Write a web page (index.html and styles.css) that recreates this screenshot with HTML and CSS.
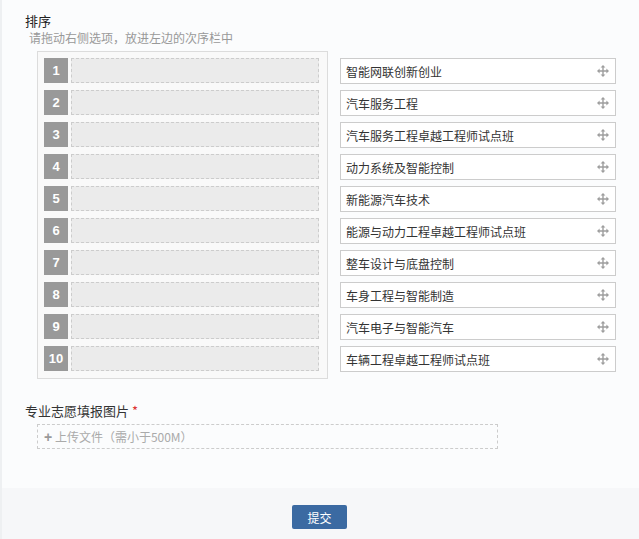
FILE: index.html
```html
<!DOCTYPE html>
<html lang="zh">
<head>
<meta charset="utf-8">
<title>排序</title>
<link rel="stylesheet" href="styles.css">
</head>
<body>
<div class="page">
  <div class="content">
    <div class="title">排序</div>
    <div class="hint">请拖动右侧选项，放进左边的次序栏中</div>
    <div class="sorter">
      <div class="slots">
        <div class="slot-row"><span class="num">1</span><span class="slot"></span></div>
        <div class="slot-row"><span class="num">2</span><span class="slot"></span></div>
        <div class="slot-row"><span class="num">3</span><span class="slot"></span></div>
        <div class="slot-row"><span class="num">4</span><span class="slot"></span></div>
        <div class="slot-row"><span class="num">5</span><span class="slot"></span></div>
        <div class="slot-row"><span class="num">6</span><span class="slot"></span></div>
        <div class="slot-row"><span class="num">7</span><span class="slot"></span></div>
        <div class="slot-row"><span class="num">8</span><span class="slot"></span></div>
        <div class="slot-row"><span class="num">9</span><span class="slot"></span></div>
        <div class="slot-row"><span class="num">10</span><span class="slot"></span></div>
      </div>
      <ul class="options">
        <li class="option"><span>智能网联创新创业</span><svg class="move" viewBox="0 0 12 12"><path d="M6 0 L3.6 2.6 H5.3 V5.3 H2.6 V3.6 L0 6 L2.6 8.4 V6.7 H5.3 V9.4 H3.6 L6 12 L8.4 9.4 H6.7 V6.7 H9.4 V8.4 L12 6 L9.4 3.6 V5.3 H6.7 V2.6 H8.4 Z"/></svg></li>
        <li class="option"><span>汽车服务工程</span><svg class="move" viewBox="0 0 12 12"><path d="M6 0 L3.6 2.6 H5.3 V5.3 H2.6 V3.6 L0 6 L2.6 8.4 V6.7 H5.3 V9.4 H3.6 L6 12 L8.4 9.4 H6.7 V6.7 H9.4 V8.4 L12 6 L9.4 3.6 V5.3 H6.7 V2.6 H8.4 Z"/></svg></li>
        <li class="option"><span>汽车服务工程卓越工程师试点班</span><svg class="move" viewBox="0 0 12 12"><path d="M6 0 L3.6 2.6 H5.3 V5.3 H2.6 V3.6 L0 6 L2.6 8.4 V6.7 H5.3 V9.4 H3.6 L6 12 L8.4 9.4 H6.7 V6.7 H9.4 V8.4 L12 6 L9.4 3.6 V5.3 H6.7 V2.6 H8.4 Z"/></svg></li>
        <li class="option"><span>动力系统及智能控制</span><svg class="move" viewBox="0 0 12 12"><path d="M6 0 L3.6 2.6 H5.3 V5.3 H2.6 V3.6 L0 6 L2.6 8.4 V6.7 H5.3 V9.4 H3.6 L6 12 L8.4 9.4 H6.7 V6.7 H9.4 V8.4 L12 6 L9.4 3.6 V5.3 H6.7 V2.6 H8.4 Z"/></svg></li>
        <li class="option"><span>新能源汽车技术</span><svg class="move" viewBox="0 0 12 12"><path d="M6 0 L3.6 2.6 H5.3 V5.3 H2.6 V3.6 L0 6 L2.6 8.4 V6.7 H5.3 V9.4 H3.6 L6 12 L8.4 9.4 H6.7 V6.7 H9.4 V8.4 L12 6 L9.4 3.6 V5.3 H6.7 V2.6 H8.4 Z"/></svg></li>
        <li class="option"><span>能源与动力工程卓越工程师试点班</span><svg class="move" viewBox="0 0 12 12"><path d="M6 0 L3.6 2.6 H5.3 V5.3 H2.6 V3.6 L0 6 L2.6 8.4 V6.7 H5.3 V9.4 H3.6 L6 12 L8.4 9.4 H6.7 V6.7 H9.4 V8.4 L12 6 L9.4 3.6 V5.3 H6.7 V2.6 H8.4 Z"/></svg></li>
        <li class="option"><span>整车设计与底盘控制</span><svg class="move" viewBox="0 0 12 12"><path d="M6 0 L3.6 2.6 H5.3 V5.3 H2.6 V3.6 L0 6 L2.6 8.4 V6.7 H5.3 V9.4 H3.6 L6 12 L8.4 9.4 H6.7 V6.7 H9.4 V8.4 L12 6 L9.4 3.6 V5.3 H6.7 V2.6 H8.4 Z"/></svg></li>
        <li class="option"><span>车身工程与智能制造</span><svg class="move" viewBox="0 0 12 12"><path d="M6 0 L3.6 2.6 H5.3 V5.3 H2.6 V3.6 L0 6 L2.6 8.4 V6.7 H5.3 V9.4 H3.6 L6 12 L8.4 9.4 H6.7 V6.7 H9.4 V8.4 L12 6 L9.4 3.6 V5.3 H6.7 V2.6 H8.4 Z"/></svg></li>
        <li class="option"><span>汽车电子与智能汽车</span><svg class="move" viewBox="0 0 12 12"><path d="M6 0 L3.6 2.6 H5.3 V5.3 H2.6 V3.6 L0 6 L2.6 8.4 V6.7 H5.3 V9.4 H3.6 L6 12 L8.4 9.4 H6.7 V6.7 H9.4 V8.4 L12 6 L9.4 3.6 V5.3 H6.7 V2.6 H8.4 Z"/></svg></li>
        <li class="option"><span>车辆工程卓越工程师试点班</span><svg class="move" viewBox="0 0 12 12"><path d="M6 0 L3.6 2.6 H5.3 V5.3 H2.6 V3.6 L0 6 L2.6 8.4 V6.7 H5.3 V9.4 H3.6 L6 12 L8.4 9.4 H6.7 V6.7 H9.4 V8.4 L12 6 L9.4 3.6 V5.3 H6.7 V2.6 H8.4 Z"/></svg></li>
      </ul>
    </div>
    <div class="label">专业志愿填报图片 <span class="req">*</span></div>
    <div class="upload"><span class="plus">+</span> 上传文件（需小于500M）</div>
  </div>
  <div class="footer">
    <button class="submit">提交</button>
  </div>
</div>
</body>
</html>
```
FILE: styles.css
```css
html, body {
  margin: 0;
  padding: 0;
  background: #fbfcfd;
}
body {
  font-family: "Noto Sans CJK SC", "Liberation Sans", sans-serif;
  color: #333;
  font-size: 12px;
}
.page {
  border-left: 2px solid #eef0f2;
  min-height: 539px;
  display: flex;
  flex-direction: column;
}
.content {
  padding: 12px 0 0 23px;
  height: 476px;
}
.title {
  font-size: 13px;
  line-height: 18px;
  color: #222;
}
.hint {
  font-size: 12px;
  line-height: 16px;
  color: #999;
  margin-left: 4px;
}
.sorter {
  display: flex;
  align-items: flex-start;
  margin-top: 5px;
}
.slots {
  margin-left: 12px;
  width: 275px;
  padding: 6px 8px 7px 6px;
  border: 1px solid #dcdcdc;
  background: #f9f9f9;
  display: flex;
  flex-direction: column;
  gap: 7px;
}
.slot-row {
  display: flex;
  gap: 3px;
  height: 25px;
}
.num {
  width: 24px;
  background: #999;
  color: #fff;
  font-family: "Liberation Sans", sans-serif;
  font-weight: bold;
  font-size: 13px;
  display: flex;
  align-items: center;
  justify-content: center;
}
.slot {
  flex: 1;
  background: #ebebeb;
  border: 1px dashed #ccc;
}
.options {
  list-style: none;
  margin: 7px 0 0 12px;
  padding: 0;
  display: flex;
  flex-direction: column;
  gap: 6px;
}
.option {
  height: 24px;
  width: 263px;
  border: 1px solid #ccc;
  background: #fff;
  display: flex;
  align-items: center;
  justify-content: space-between;
  padding: 0 6px 0 5px;
  box-sizing: content-box;
  color: #333;
}
.move {
  width: 12px;
  height: 12px;
  fill: #9e9e9e;
}
.label {
  margin-top: 23px;
  font-size: 13px;
  line-height: 18px;
  color: #333;
}
.req {
  color: #d33;
}
.upload {
  margin: 4px 0 0 12px;
  width: 453px;
  height: 23px;
  border: 1px dashed #ccc;
  padding-left: 6px;
  line-height: 23px;
  color: #aaa;
  font-size: 12px;
}
.plus {
  font-family: "Liberation Sans", sans-serif;
  font-weight: bold;
  font-size: 14px;
  color: #999;
}
.footer {
  flex: 1;
  background: #f6f7f9;
  display: flex;
  justify-content: center;
  padding-top: 17px;
}
.submit {
  width: 55px;
  height: 24px;
  background: #3b6aa2;
  color: #fff;
  border: none;
  border-radius: 2px;
  font-family: "Noto Sans CJK SC", sans-serif;
  font-size: 12px;
  padding: 0;
  margin-left: -2px;
}
```
